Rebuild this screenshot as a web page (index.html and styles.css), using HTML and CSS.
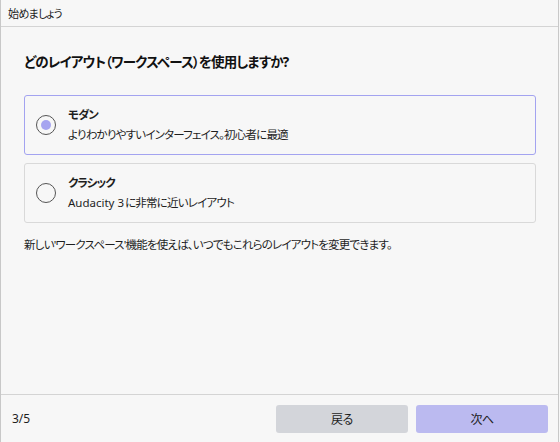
FILE: index.html
```html
<!DOCTYPE html>
<html lang="ja">
<head>
<meta charset="utf-8">
<link rel="stylesheet" href="styles.css">
</head>
<body>
<div class="window">
  <div class="titlebar">始めましょう</div>
  <div class="content">
    <h1 class="heading">どのレイアウト（ワークスペース）を使用しますか?</h1>
    <div class="options">
      <div class="card selected">
        <span class="radio checked"></span>
        <div class="card-text">
          <div class="card-title">モダン</div>
          <div class="card-desc tight">よりわかりやすいインターフェイス。初心者に最適</div>
        </div>
      </div>
      <div class="card">
        <span class="radio"></span>
        <div class="card-text">
          <div class="card-title">クラシック</div>
          <div class="card-desc"><span class="latin">Audacity 3</span>に非常に近いレイアウト</div>
        </div>
      </div>
    </div>
    <p class="note">新しい'ワークスペース'機能を使えば、いつでもこれらのレイアウトを変更できます。</p>
  </div>
  <div class="footer">
    <span class="step">3/5</span>
    <div class="buttons">
      <button class="btn back">戻る</button>
      <button class="btn next">次へ</button>
    </div>
  </div>
</div>
</body>
</html>
```
FILE: styles.css
```css
html, body {
  margin: 0;
  padding: 0;
  background: #f7f7f7;
}
body {
  font-family: "Noto Sans", "Noto Sans CJK JP", sans-serif;
  font-size: 12px;
  color: #1e1e1e;
  font-feature-settings: "palt";
}
.window {
  width: 559px;
  height: 442px;
  box-sizing: border-box;
  border-left: 1px solid #c8c8c8;
  border-right: 1px solid #c8c8c8;
  display: flex;
  flex-direction: column;
  background: #f7f7f7;
}
.titlebar {
  height: 27px;
  box-sizing: border-box;
  border-bottom: 1px solid #d4d4d4;
  padding-left: 7px;
  line-height: 27px;
  font-size: 11px;
  letter-spacing: -0.7px;
  color: #1a1a1a;
}
.content {
  flex: 1;
  padding: 25px 23px 0 23px;
}
.heading {
  margin: 0;
  font-size: 13.5px;
  font-weight: bold;
  line-height: 20px;
  letter-spacing: -0.8px;
  color: #111;
}
.options {
  margin-top: 23px;
  display: flex;
  flex-direction: column;
  gap: 8px;
  width: 512px;
}
.card {
  height: 60px;
  box-sizing: border-box;
  border: 1px solid #d9d9d9;
  border-radius: 3px;
  display: flex;
  align-items: center;
  padding-left: 11px;
  background: #f7f7f7;
}
.card.selected {
  border-color: #a3a3f0;
}
.radio {
  width: 20px;
  height: 20px;
  box-sizing: border-box;
  border: 1.5px solid #555;
  border-radius: 50%;
  display: flex;
  align-items: center;
  justify-content: center;
  flex: none;
}
.radio.checked::after {
  content: "";
  width: 10px;
  height: 10px;
  border-radius: 50%;
  background: #a6a4f0;
}
.card-text {
  margin-left: 12px;
  display: flex;
  flex-direction: column;
}
.card-title {
  font-weight: bold;
  line-height: 20px;
  font-size: 11.5px;
  letter-spacing: -0.9px;
}
.card-desc {
  line-height: 20px;
  font-size: 11.5px;
  letter-spacing: -0.8px;
}
.card-desc.tight {
  letter-spacing: -0.8px;
}
.latin {
  letter-spacing: 0;
  margin-right: 1px;
}
.note {
  margin: 12px 0 0 0;
  line-height: 20px;
  font-size: 11.5px;
  letter-spacing: -0.8px;
}
.footer {
  height: 48px;
  box-sizing: border-box;
  border-top: 1px solid #d4d4d4;
  display: flex;
  align-items: center;
  justify-content: space-between;
  padding: 0 10px 0 11px;
}
.step {
  font-size: 12px;
}
.buttons {
  display: flex;
  gap: 8px;
}
.btn {
  width: 132px;
  height: 28px;
  border: none;
  border-radius: 3px;
  font-family: "Noto Sans", "Noto Sans CJK JP", sans-serif;
  font-feature-settings: "palt";
  font-size: 12px;
  letter-spacing: -0.5px;
  color: #1e1e1e;
  padding: 0;
}
.btn.back {
  background: #d3d5da;
}
.btn.next {
  background: #bbbaf0;
}
```
